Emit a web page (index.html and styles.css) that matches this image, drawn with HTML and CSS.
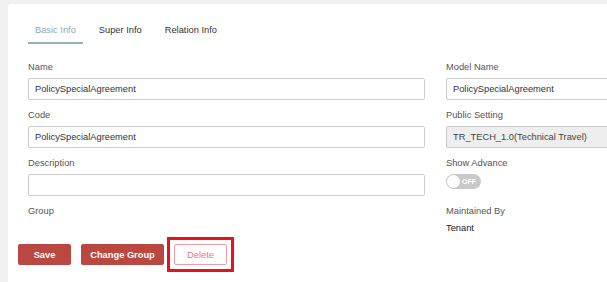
FILE: index.html
```html
<!DOCTYPE html>
<html>
<head>
  <meta charset="UTF-8">
  <title>Model Detail</title>
  <link rel="stylesheet" href="styles.css">
</head>
<body>
  <div class="card">
    <div class="tabs">
      <div class="tab active">Basic Info</div>
      <div class="tab">Super Info</div>
      <div class="tab">Relation Info</div>
    </div>

    <div class="form">
      <div class="col">
        <div class="form-group">
          <label>Name</label>
          <input type="text" value="PolicySpecialAgreement">
        </div>
        <div class="form-group">
          <label>Code</label>
          <input type="text" value="PolicySpecialAgreement">
        </div>
        <div class="form-group">
          <label>Description</label>
          <input type="text" value="">
        </div>
        <div class="form-group">
          <label>Group</label>
        </div>
      </div>
      <div class="col">
        <div class="form-group">
          <label>Model Name</label>
          <input type="text" value="PolicySpecialAgreement">
        </div>
        <div class="form-group">
          <label>Public Setting</label>
          <input type="text" class="readonly" value="TR_TECH_1.0(Technical Travel)" readonly>
        </div>
        <div class="form-group">
          <label>Show Advance</label>
          <div class="switch-row">
            <span class="switch"><span class="knob"></span><span class="switch-text">OFF</span></span>
          </div>
        </div>
        <div class="form-group">
          <label>Maintained By</label>
          <div class="value">Tenant</div>
        </div>
      </div>
    </div>

    <div class="actions">
      <button class="btn primary save">Save</button>
      <button class="btn primary change">Change Group</button>
      <span class="highlight"><button class="btn outline">Delete</button></span>
    </div>
  </div>
</body>
</html>
```

FILE: styles.css
```css
body {
  margin: 0;
  background-color: #f1f1f1;
  font-family: "Liberation Sans", Arial, sans-serif;
  font-size: 9.3px;
  color: #555;
  overflow: hidden;
}

.card {
  margin: 4px 0 0 8px;
  width: 900px;
  height: 320px;
  padding-top: 9px;
  background-color: #fff;
  border-radius: 3px;
}

.tabs {
  display: flex;
  gap: 9px;
  margin-left: 20px;
}

.tab {
  padding: 10px 7px 5px;
  line-height: 14px;
  color: #333;
  border-bottom: 2px solid transparent;
}

.tab.active {
  color: #86a9b7;
  border-bottom-color: #8fb3bf;
}

.form {
  display: grid;
  grid-template-columns: 397px 397px;
  column-gap: 21px;
  margin: 16px 0 0 20px;
}

.form-group {
  display: flex;
  flex-direction: column;
  margin-bottom: 8px;
}

label {
  line-height: 14px;
  margin-bottom: 4px;
  color: #555;
}

input {
  box-sizing: border-box;
  height: 22px;
  padding: 0 6px;
  font-family: inherit;
  font-size: 9.3px;
  color: #333;
  border: 1px solid #ccc;
  border-radius: 2px;
  background-color: #fff;
  outline: none;
}

input.readonly {
  background-color: #eee;
  color: #444;
}

.switch-row {
  height: 22px;
}

.switch {
  position: relative;
  display: inline-block;
  width: 35px;
  height: 15px;
  border-radius: 8px;
  background-color: #c9c9c9;
}

.knob {
  position: absolute;
  left: 1px;
  top: 1px;
  width: 13px;
  height: 13px;
  border-radius: 50%;
  background-color: #fff;
}

.switch-text {
  position: absolute;
  left: 16px;
  top: 0;
  line-height: 15px;
  font-size: 7px;
  font-weight: bold;
  color: #fff;
}

.value {
  line-height: 14px;
  margin-top: -1px;
  color: #222;
}

.actions {
  display: flex;
  align-items: flex-start;
  gap: 10px;
  margin: 1px 0 0 10px;
}

.btn {
  box-sizing: border-box;
  height: 21px;
  padding: 0;
  font-family: inherit;
  font-size: 9.3px;
  border-radius: 2px;
  cursor: pointer;
}

.btn.primary {
  font-weight: bold;
  color: #fff;
  background-color: #ba4840;
  border: none;
}

.save {
  width: 53px;
}

.change {
  width: 83px;
}

.btn.outline {
  width: 53px;
  color: #ee7482;
  background-color: #fff;
  border: 1px solid #f29aa3;
}

.highlight {
  display: flex;
  margin: -7px;
  padding: 4px;
  border: 3px solid #e5131d;
}
```
